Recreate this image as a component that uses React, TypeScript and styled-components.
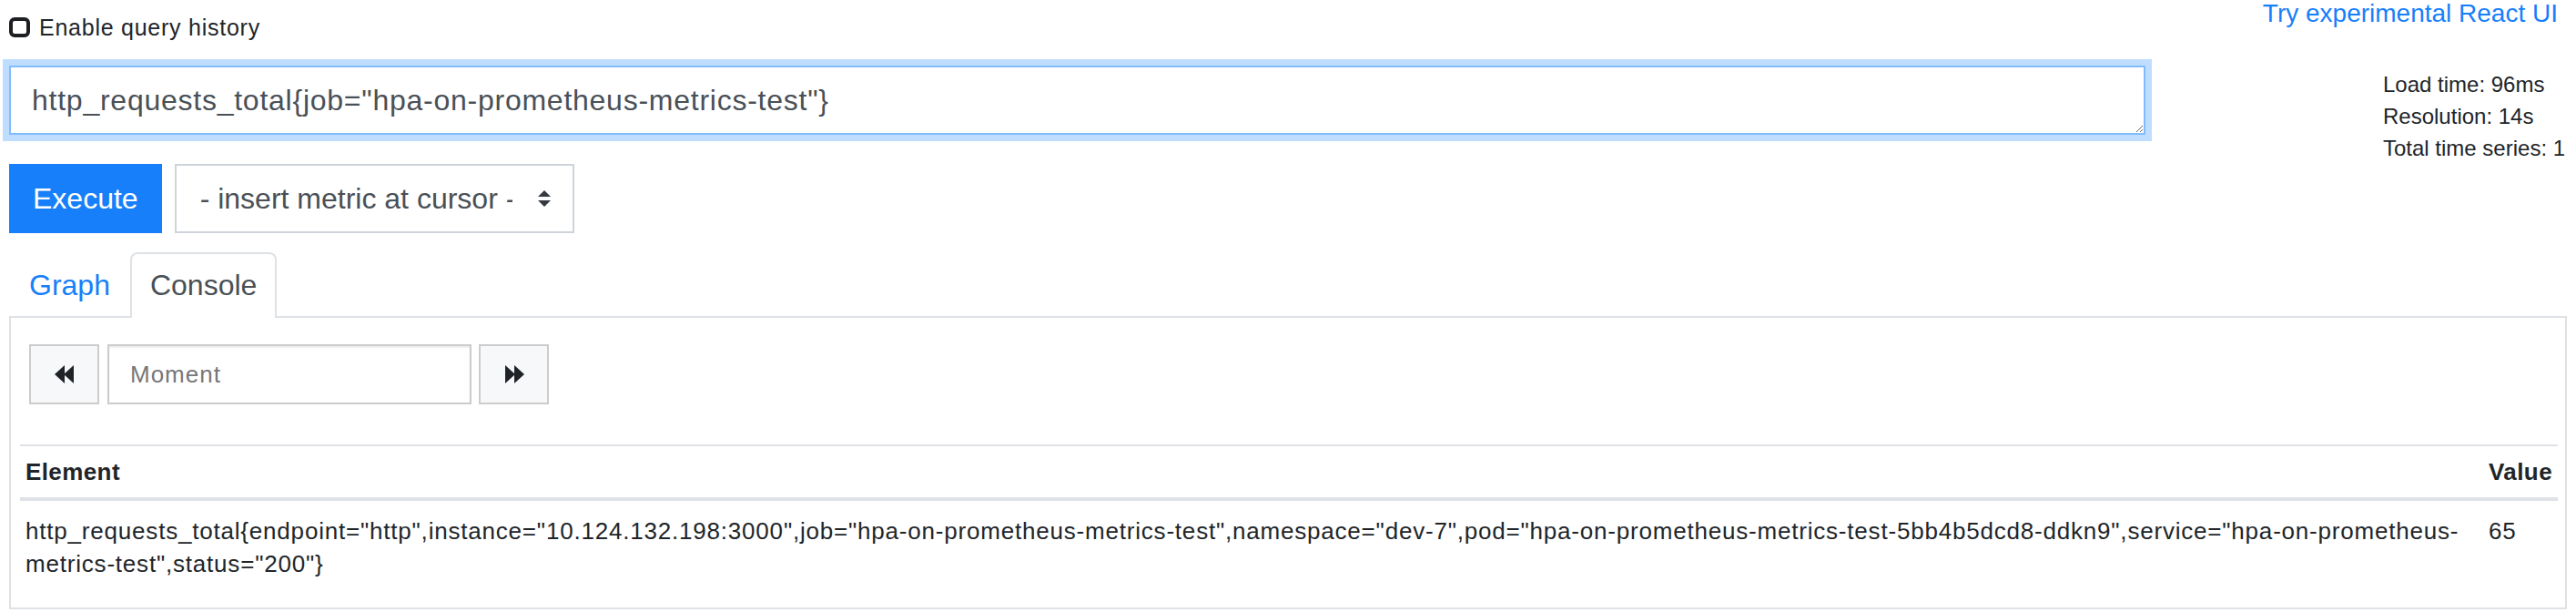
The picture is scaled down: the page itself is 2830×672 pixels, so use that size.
import React from 'react';
import styled, { createGlobalStyle } from 'styled-components';

const GlobalStyle = createGlobalStyle`
  html, body {
    margin: 0;
    padding: 0;
    background: #ffffff;
    overflow: hidden;
  }
  body {
    font-family: "Liberation Sans", Arial, sans-serif;
    color: #212529;
  }
`;

const Page = styled.div`
  width: 2830px;
  box-sizing: border-box;
  padding: 0 10px;
`;

const TopBar = styled.div`
  display: flex;
  justify-content: space-between;
  align-items: flex-start;
  height: 48px;
  margin-bottom: 24px;
`;

const HistoryToggle = styled.label`
  display: flex;
  align-items: center;
  margin-top: 12px;
  height: 36px;
  font-size: 25px;
  line-height: 36px;
  letter-spacing: 0.75px;
  color: #212529;
`;

const CheckBox = styled.input`
  appearance: none;
  box-sizing: border-box;
  width: 23px;
  height: 22px;
  margin: 0 10px 0 0;
  border: 4px solid #1d1f22;
  border-radius: 6px;
  background: #ffffff;
`;

const ReactLink = styled.a`
  font-size: 28px;
  line-height: 30px;
  color: #177ffa;
  text-decoration: none;
  margin-right: 10px;
`;

const QueryRow = styled.div`
  display: grid;
  grid-template-columns: 2347px auto;
  column-gap: 261px;
  align-items: start;
`;

const QueryInput = styled.textarea`
  display: block;
  box-sizing: border-box;
  width: 100%;
  height: 76px;
  margin: 0;
  padding: 12px 23px;
  border: 2px solid #80bdff;
  border-radius: 0;
  box-shadow: 0 0 0 7px rgba(0, 123, 255, 0.25);
  outline: none;
  resize: vertical;
  overflow: hidden;
  font-family: "Liberation Sans", Arial, sans-serif;
  font-size: 32px;
  letter-spacing: 0.75px;
  line-height: 48px;
  color: #495057;
  background: #ffffff;
`;

const Stats = styled.div`
  padding-top: 3px;
  font-size: 24px;
  line-height: 35px;
  white-space: nowrap;
  color: #212529;
`;

const ActionRow = styled.div`
  display: flex;
  gap: 14px;
  height: 76px;
`;

const ExecuteButton = styled.button`
  height: 76px;
  padding: 0 26px;
  border: none;
  border-radius: 0;
  background: #177ffa;
  color: #ffffff;
  font-family: "Liberation Sans", Arial, sans-serif;
  font-size: 32px;
`;

const MetricSelect = styled.div`
  box-sizing: border-box;
  width: 439px;
  height: 76px;
  display: flex;
  align-items: center;
  padding: 0 23px 0 26px;
  border: 2px solid #ced4da;
  background: #ffffff;
`;

const SelectText = styled.span`
  width: 343px;
  overflow: hidden;
  white-space: nowrap;
  font-size: 32px;
  color: #495057;
`;

const SelectArrows = styled.svg`
  margin-left: auto;
  display: block;
`;

const TabBar = styled.div`
  display: flex;
  margin-top: 21px;
`;

const Tab = styled.div<{ $active?: boolean }>`
  position: relative;
  z-index: 1;
  padding: 10px 20px 12px;
  margin-bottom: -2px;
  border: 2px solid ${(p) => (p.$active ? '#dee2e6' : 'transparent')};
  border-bottom: none;
  border-radius: 8px 8px 0 0;
  background: ${(p) => (p.$active ? '#ffffff' : 'transparent')};
  color: ${(p) => (p.$active ? '#495057' : '#177ffa')};
  font-size: 32px;
  line-height: 48px;
`;

const Panel = styled.div`
  border: 2px solid #dee2e6;
  padding: 29px 8px 20px 10px;
`;

const MomentRow = styled.div`
  display: flex;
  height: 66px;
  margin-left: 10px;
`;

const NavButton = styled.button`
  box-sizing: border-box;
  width: 77px;
  height: 66px;
  padding: 0;
  display: flex;
  align-items: center;
  justify-content: center;
  border: 2px solid #cccccc;
  border-radius: 0;
  background: #f7f8fa;
`;

const MomentInput = styled.input`
  box-sizing: border-box;
  width: 400px;
  height: 66px;
  margin: 0 8px 0 9px;
  padding: 0 23px;
  border: 2px solid #cccccc;
  border-radius: 0;
  box-shadow: inset 0 2px 2px rgba(0, 0, 0, 0.075);
  outline: none;
  font-family: "Liberation Sans", Arial, sans-serif;
  font-size: 26px;
  letter-spacing: 1px;
  color: #555555;
  &::placeholder {
    color: #777777;
  }
`;

const ResultTable = styled.table`
  width: 100%;
  margin-top: 44px;
  border-collapse: separate;
  border-spacing: 0;
  font-size: 26px;
  letter-spacing: 0.8px;
  color: #212529;
`;

const HeadCell = styled.th<{ $narrow?: boolean }>`
  text-align: left;
  padding: 10px 6px;
  line-height: 36px;
  font-weight: bold;
  letter-spacing: 0.4px;
  border-top: 2px solid #dee2e6;
  border-bottom: 4px solid #dee2e6;
  width: ${(p) => (p.$narrow ? '64px' : 'auto')};
`;

const BodyCell = styled.td`
  padding: 15px 6px 10px;
  line-height: 36px;
  vertical-align: top;
`;

const BackIcon = () => (
  <svg width="22" height="20" viewBox="0 0 22 20">
    <polygon points="0,10 11,0 11,20" fill="#1f2327" />
    <polygon points="10,10 21,0 21,20" fill="#1f2327" />
  </svg>
);

const ForwardIcon = () => (
  <svg width="22" height="20" viewBox="0 0 22 20">
    <polygon points="1,0 12,10 1,20" fill="#1f2327" />
    <polygon points="11,0 22,10 11,20" fill="#1f2327" />
  </svg>
);

export default function App() {
  return (
    <>
      <GlobalStyle />
      <Page>
        <TopBar>
          <HistoryToggle>
            <CheckBox type="checkbox" />
            Enable query history
          </HistoryToggle>
          <ReactLink href="#">Try experimental React UI</ReactLink>
        </TopBar>

        <QueryRow>
          <QueryInput
            rows={1}
            readOnly
            defaultValue={'http_requests_total{job="hpa-on-prometheus-metrics-test"}'}
          />
          <Stats>
            <div>Load time: 96ms</div>
            <div>Resolution: 14s</div>
            <div>Total time series: 1</div>
          </Stats>
        </QueryRow>

        <ActionRow>
          <ExecuteButton>Execute</ExecuteButton>
          <MetricSelect>
            <SelectText>- insert metric at cursor -</SelectText>
            <SelectArrows width="16" height="20" viewBox="0 0 16 20">
              <polygon points="1,8 8,1 15,8" fill="#343a40" />
              <polygon points="1,12 15,12 8,19" fill="#343a40" />
            </SelectArrows>
          </MetricSelect>
        </ActionRow>

        <TabBar>
          <Tab>Graph</Tab>
          <Tab $active>Console</Tab>
        </TabBar>

        <Panel>
          <MomentRow>
            <NavButton>
              <BackIcon />
            </NavButton>
            <MomentInput placeholder="Moment" />
            <NavButton>
              <ForwardIcon />
            </NavButton>
          </MomentRow>

          <ResultTable>
            <thead>
              <tr>
                <HeadCell>Element</HeadCell>
                <HeadCell $narrow>Value</HeadCell>
              </tr>
            </thead>
            <tbody>
              <tr>
                <BodyCell>
                  {'http_requests_total{endpoint="http",instance="10.124.132.198:3000",job="hpa-on-prometheus-metrics-test",namespace="dev-7",pod="hpa-on-prometheus-metrics-test-5bb4b5dcd8-ddkn9",service="hpa-on-prometheus-metrics-test",status="200"}'}
                </BodyCell>
                <BodyCell>65</BodyCell>
              </tr>
            </tbody>
          </ResultTable>
        </Panel>
      </Page>
    </>
  );
}
